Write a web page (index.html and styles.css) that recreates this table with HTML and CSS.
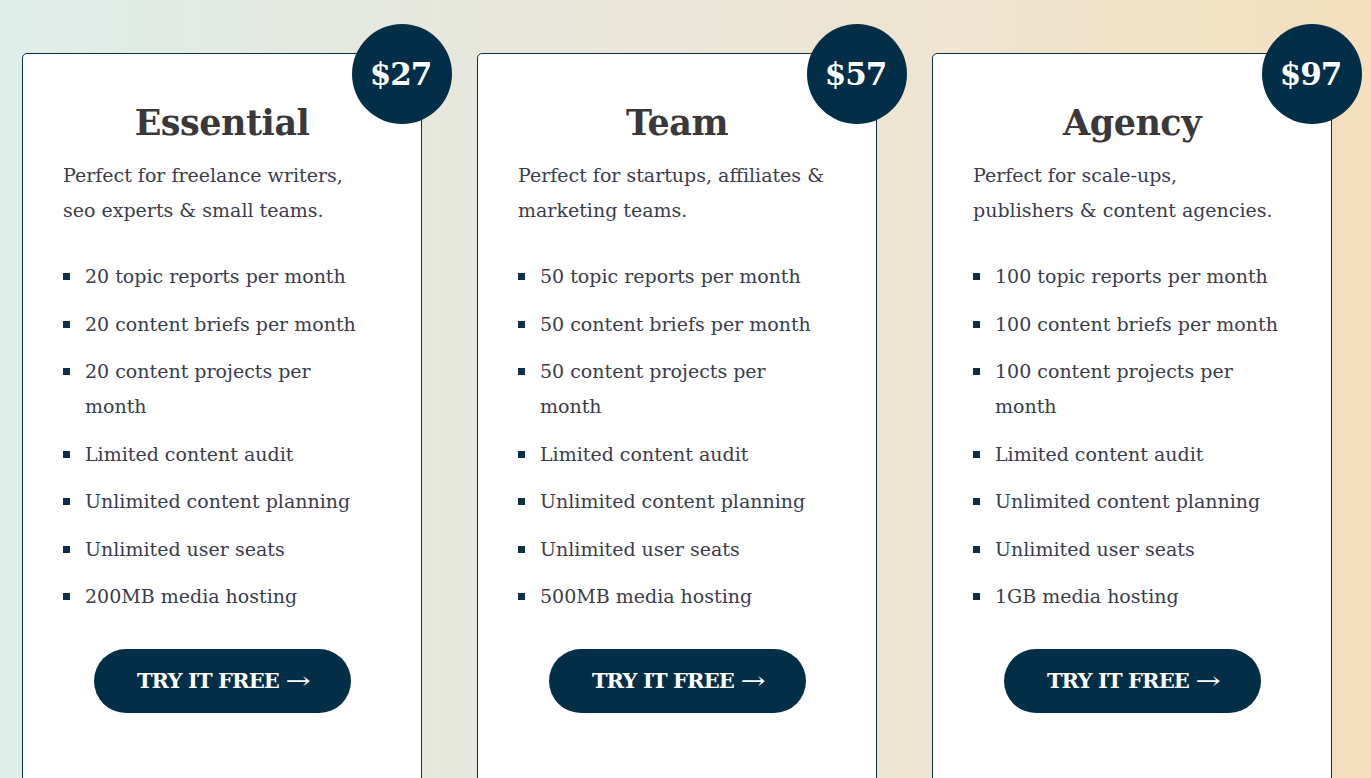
FILE: index.html
```html
<!DOCTYPE html>
<html lang="en">
<head>
<meta charset="utf-8">
<title>Pricing</title>
<link rel="stylesheet" href="styles.css">
</head>
<body>
<main class="plans">
  <section class="card">
    <div class="price">$27</div>
    <h2 class="name">Essential</h2>
    <p class="desc">Perfect for freelance writers, seo experts &amp; small teams.</p>
    <ul class="features">
      <li>20 topic reports per month</li>
      <li>20 content briefs per month</li>
      <li>20 content projects per month</li>
      <li>Limited content audit</li>
      <li>Unlimited content planning</li>
      <li>Unlimited user seats</li>
      <li>200MB media hosting</li>
    </ul>
    <a class="cta" href="#">TRY IT FREE <span class="arrow">→</span></a>
  </section>
  <section class="card">
    <div class="price">$57</div>
    <h2 class="name">Team</h2>
    <p class="desc">Perfect for startups, affiliates &amp; marketing teams.</p>
    <ul class="features">
      <li>50 topic reports per month</li>
      <li>50 content briefs per month</li>
      <li>50 content projects per month</li>
      <li>Limited content audit</li>
      <li>Unlimited content planning</li>
      <li>Unlimited user seats</li>
      <li>500MB media hosting</li>
    </ul>
    <a class="cta" href="#">TRY IT FREE <span class="arrow">→</span></a>
  </section>
  <section class="card">
    <div class="price">$97</div>
    <h2 class="name">Agency</h2>
    <p class="desc">Perfect for scale-ups, publishers &amp; content agencies.</p>
    <ul class="features">
      <li>100 topic reports per month</li>
      <li>100 content briefs per month</li>
      <li>100 content projects per month</li>
      <li>Limited content audit</li>
      <li>Unlimited content planning</li>
      <li>Unlimited user seats</li>
      <li>1GB media hosting</li>
    </ul>
    <a class="cta" href="#">TRY IT FREE <span class="arrow">→</span></a>
  </section>
</main>
</body>
</html>
```

FILE: styles.css
```css
html, body {
  margin: 0;
  padding: 0;
  height: 100%;
}
body {
  background: linear-gradient(90deg, #dfeeea 0%, #e7e7dc 35%, #efe4cf 70%, #f4dfbe 100%);
  font-family: "DejaVu Serif", "Liberation Serif", serif;
  overflow: hidden;
}
.plans {
  display: flex;
  gap: 55px;
  padding: 53px 0 0 22px;
  align-items: flex-start;
}
.card {
  position: relative;
  box-sizing: border-box;
  width: 400px;
  height: 760px;
  background: #fff;
  border: 1px solid #0b2f45;
  border-radius: 5px;
  padding: 42px 48px 0 40px;
  display: flex;
  flex-direction: column;
}
.price {
  position: absolute;
  top: -30px;
  right: -31px;
  width: 100px;
  height: 100px;
  border-radius: 50%;
  background: #022f47;
  color: #fff;
  font-weight: 700;
  font-size: 31px;
  display: flex;
  align-items: center;
  justify-content: center;
  letter-spacing: -1px;
  padding-right: 3px;
  box-sizing: border-box;
}
.name {
  margin: 0 -8px 0 0;
  text-align: center;
  font-size: 35px;
  line-height: 54px;
  font-weight: 700;
  color: #3b3839;
  letter-spacing: -0.5px;
}
.desc {
  margin: 8px 0 0;
  font-size: 19px;
  line-height: 35px;
  color: #3a3c4c;
}
.features {
  list-style: none;
  margin: 31px 0 0;
  padding: 0;
}
.features li {
  position: relative;
  padding-left: 22px;
  font-size: 19px;
  line-height: 35px;
  color: #3a3c4c;
  margin-bottom: 12.5px;
}
.features li::before {
  content: "";
  position: absolute;
  left: 0;
  top: 14px;
  width: 7px;
  height: 7px;
  background: #0b2f45;
}
.cta {
  align-self: center;
  margin: 22px -8px 0 0;
  width: 257px;
  height: 64px;
  border-radius: 32px;
  background: #022f47;
  color: #fff;
  text-decoration: none;
  font-weight: 700;
  font-size: 21px;
  letter-spacing: -0.9px;
  display: flex;
  align-items: center;
  justify-content: center;
}
.arrow {
  margin-left: 9px;
  font-weight: 400;
  font-size: 24px;
  transform: scaleX(1.25);
  display: inline-block;
}
```
